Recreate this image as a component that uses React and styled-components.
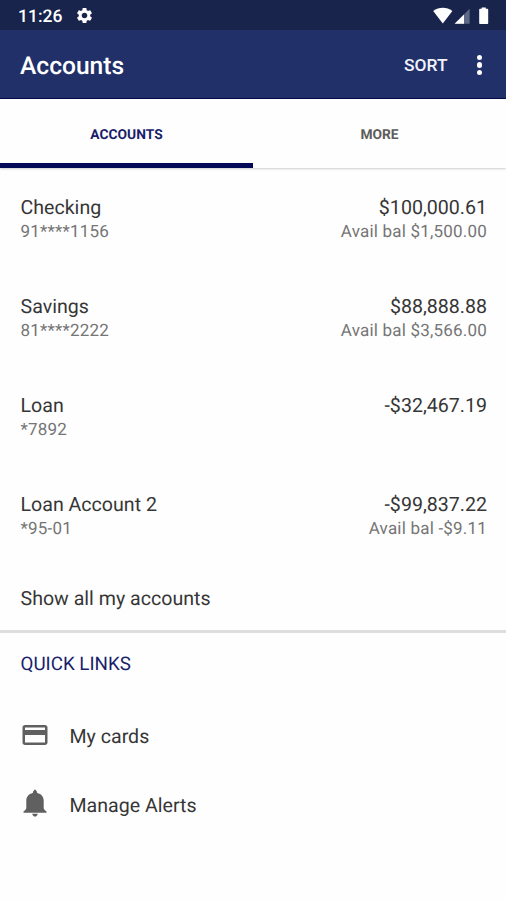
import React from "react";
import styled, { createGlobalStyle } from "styled-components";

const accounts = [
  {
    name: "Checking",
    number: "91****1156",
    balance: "$100,000.61",
    available: "Avail bal $1,500.00",
  },
  {
    name: "Savings",
    number: "81****2222",
    balance: "$88,888.88",
    available: "Avail bal $3,566.00",
  },
  { name: "Loan", number: "*7892", balance: "-$32,467.19" },
  {
    name: "Loan Account 2",
    number: "*95-01",
    balance: "-$99,837.22",
    available: "Avail bal -$9.11",
  },
];

export default function App() {
  return (
    <Screen>
      <GlobalStyle />
      <StatusBar>
        <Clock>11:26</Clock>
        <GearIcon />
        <StatusIcons />
      </StatusBar>
      <AppBar>
        <Title>Accounts</Title>
        <SortButton>SORT</SortButton>
        <MenuButton aria-label="More options">
          <Dot />
          <Dot />
          <Dot />
        </MenuButton>
      </AppBar>
      <Tabs>
        <Tab $active>ACCOUNTS</Tab>
        <Tab>MORE</Tab>
      </Tabs>
      <AccountList>
        {accounts.map((account) => (
          <AccountRow key={account.name}>
            <Column>
              <Primary>{account.name}</Primary>
              <Secondary>{account.number}</Secondary>
            </Column>
            <Column $end>
              <Primary>{account.balance}</Primary>
              {account.available && <Secondary>{account.available}</Secondary>}
            </Column>
          </AccountRow>
        ))}
      </AccountList>
      <ShowAll>Show all my accounts</ShowAll>
      <LinksHeading>QUICK LINKS</LinksHeading>
      <QuickLink>
        <CardIcon />
        <LinkLabel>My cards</LinkLabel>
      </QuickLink>
      <QuickLink>
        <BellIcon />
        <LinkLabel>Manage Alerts</LinkLabel>
      </QuickLink>
    </Screen>
  );
}

function GearIcon() {
  return (
    <svg width="19" height="19" viewBox="0 0 24 24" fill="#fff">
      <path d="M19.14 12.94c.04-.3.06-.61.06-.94 0-.32-.02-.64-.07-.94l2.03-1.58c.18-.14.23-.41.12-.61l-1.92-3.32c-.12-.22-.37-.29-.59-.22l-2.39.96c-.5-.38-1.03-.7-1.62-.94l-.36-2.54c-.04-.24-.24-.41-.48-.41h-3.84c-.24 0-.43.17-.47.41l-.36 2.54c-.59.24-1.13.57-1.62.94l-2.39-.96c-.22-.08-.47 0-.59.22L2.74 8.87c-.12.21-.08.47.12.61l2.03 1.58c-.05.3-.09.63-.09.94s.02.64.07.94l-2.03 1.58c-.18.14-.23.41-.12.61l1.92 3.32c.12.22.37.29.59.22l2.39-.96c.5.38 1.03.7 1.62.94l.36 2.54c.05.24.24.41.48.41h3.84c.24 0 .44-.17.47-.41l.36-2.54c.59-.24 1.13-.56 1.62-.94l2.39.96c.22.08.47 0 .59-.22l1.92-3.32c.12-.22.07-.47-.12-.61l-2.01-1.58zM12 15.6c-1.98 0-3.6-1.62-3.6-3.6s1.62-3.6 3.6-3.6 3.6 1.62 3.6 3.6-1.62 3.6-3.6 3.6z" />
    </svg>
  );
}

// wifi, mobile signal and battery
function StatusIcons() {
  return (
    <StatusSvg width="58" height="18" viewBox="0 0 58 18">
      <path d="M0.2 4C6-.4 13.6-.4 19.4 4L9.8 16.4z" fill="#fff" />
      <path d="M36.6 1.8V16.8H21.6z" fill="#5f6886" />
      <path d="M31 7.4V16.8H21.6z" fill="#fff" />
      <path
        d="M48.6 1.8V.4h4.2v1.4h1.4c.6 0 1 .4 1 1v13.2c0 .6-.4 1-1 1h-7c-.6 0-1-.4-1-1V2.8c0-.6.4-1 1-1z"
        fill="#fff"
      />
    </StatusSvg>
  );
}

function CardIcon() {
  return (
    <svg width="30" height="30" viewBox="0 0 24 24" fill="#606060">
      <path d="M20 4H4c-1.11 0-1.99.89-1.99 2L2 18c0 1.11.89 2 2 2h16c1.11 0 2-.89 2-2V6c0-1.11-.89-2-2-2zm0 14H4v-6h16v6zm0-10H4V6h16v2z" />
    </svg>
  );
}

function BellIcon() {
  return (
    <svg width="30" height="30" viewBox="0 0 30 30" fill="#606060">
      <path d="M15 .2l1.9 2.4.3 1.5c4.2 1 6.5 3.8 6.5 8v6.8c0 1 .7 1.8 2.8 3.5v1.4h-23v-1.4c2.1-1.7 2.8-2.5 2.8-3.5v-6.8c0-4.2 2.3-7 6.5-8l.3-1.5z" />
      <path d="M12.2 24.8h5.6c-.4 1.9-1.4 2.8-2.8 2.8s-2.4-.9-2.8-2.8z" />
    </svg>
  );
}

const GlobalStyle = createGlobalStyle`
  * {
    box-sizing: border-box;
  }
  body {
    margin: 0;
    background: #fff;
    font-family: Roboto, sans-serif;
    text-rendering: geometricPrecision;
  }
`;

const Screen = styled.div`
  height: 900px;
  overflow: hidden;
  background: #fefefe;
`;

const StatusBar = styled.div`
  display: flex;
  align-items: center;
  height: 30px;
  padding: 1px 15px 0 18px;
  background: #18244c;
`;

const Clock = styled.span`
  width: 56.5px;
  padding-top: 2px;
  color: #fff;
  font-size: 17.5px;
  font-weight: 500;
  line-height: 28px;
`;

const StatusSvg = styled.svg`
  margin-left: auto;
`;

const AppBar = styled.header`
  display: flex;
  align-items: center;
  height: 69px;
  padding: 2px 20px 0;
  background: #213069;
  border-bottom: 1.5px solid #050a50;
  color: #fff;
`;

const Title = styled.h1`
  flex: 1;
  margin: 0;
  padding-top: 2px;
  font-size: 24.6px;
  font-weight: 500;
`;

const SortButton = styled.button`
  padding: 0;
  border: 0;
  background: none;
  color: #f2f3fa;
  font: 500 17.4px Roboto, sans-serif;
`;

const MenuButton = styled.button`
  display: flex;
  flex-direction: column;
  align-items: center;
  gap: 2px;
  width: 13px;
  margin-left: 25.5px;
  padding: 0;
  border: 0;
  background: none;
`;

const Dot = styled.span`
  width: 5.5px;
  height: 5.5px;
  border-radius: 50%;
  background: #fff;
`;

const Tabs = styled.nav`
  display: flex;
  height: 69px;
  box-shadow: 0 1px 2px rgba(0, 0, 0, 0.2);
`;

const Tab = styled.div`
  flex: 1;
  padding-top: 26px;
  border-bottom: 5px solid ${(props) => (props.$active ? "#030857" : "transparent")};
  color: ${(props) => (props.$active ? "#1a1f6b" : "#5c5c5c")};
  font-size: 13.8px;
  font-weight: 700;
  line-height: 20px;
  text-align: center;
`;

const AccountList = styled.div`
  padding-top: 8px;
`;

const AccountRow = styled.div`
  display: flex;
  justify-content: space-between;
  height: 99.1px;
  padding: 19px 19px 0 20.5px;
`;

const Column = styled.div`
  text-align: ${(props) => (props.$end ? "right" : "left")};
`;

const Primary = styled.div`
  color: #363636;
  font-size: 19.6px;
  line-height: 25px;
`;

const Secondary = styled.div`
  color: #757575;
  font-size: 17px;
  line-height: 25px;
  letter-spacing: 0.2px;
`;

const ShowAll = styled.div`
  height: 60.6px;
  padding: 14px 20.5px 0;
  border-bottom: 3px solid #dedede;
  color: #363636;
  font-size: 19.6px;
  line-height: 25px;
`;

const LinksHeading = styled.h2`
  margin: 0;
  height: 68px;
  padding: 19px 20.5px 0;
  color: #1a1f6b;
  font-size: 18.8px;
  font-weight: 400;
  line-height: 25px;
`;

const QuickLink = styled.div`
  display: flex;
  align-items: center;
  gap: 19.5px;
  height: 69px;
  padding: 0 20px;
`;

const LinkLabel = styled.span`
  padding-top: 2px;
  color: #363636;
  font-size: 19.6px;
`;
